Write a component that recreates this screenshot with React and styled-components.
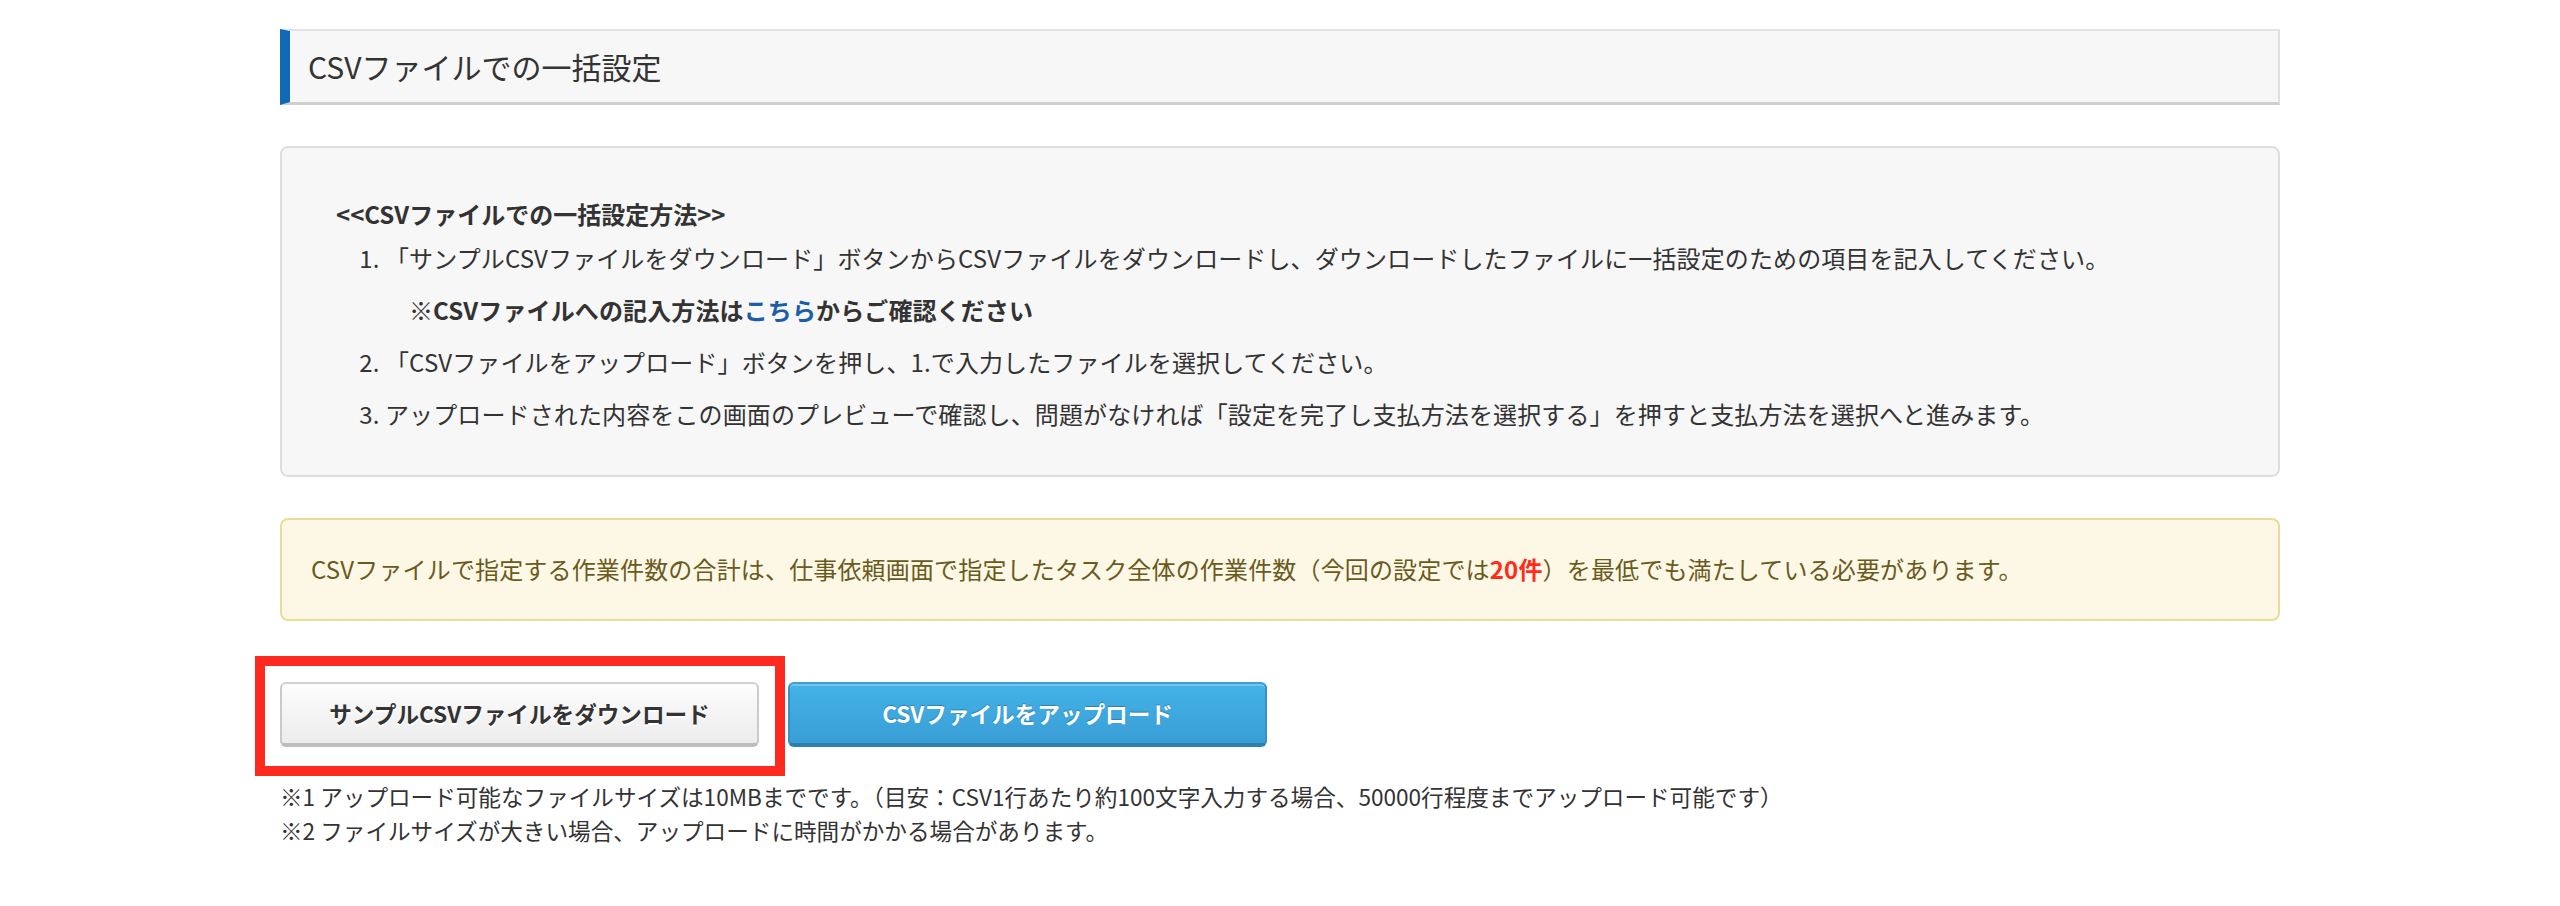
import React from "react";
import styled, { createGlobalStyle } from "styled-components";

const GlobalStyle = createGlobalStyle`
  html, body { margin: 0; padding: 0; background: #ffffff; }
  body {
    font-family: "Noto Sans CJK JP", "Noto Sans", sans-serif;
    color: #333333;
  }
  * { box-sizing: border-box; }
`;

const Page = styled.div`
  width: 2000px;
  margin: 0 auto;
  padding-top: 29px;
  padding-bottom: 40px;
`;

const SectionHeader = styled.h2`
  margin: 0;
  height: 76px;
  background: #f7f7f7;
  border-top: 2px solid #e4e4e4;
  border-right: 2px solid #e0e0e0;
  border-bottom: 3px solid #cfcfcf;
  border-left: 10px solid #0f69b4;
  padding-left: 18px;
  font-size: 30px;
  font-weight: 400;
  line-height: 71px;
  color: #333333;
`;

const InfoBox = styled.div`
  margin-top: 41px;
  background: #f7f7f7;
  border: 2px solid #dedede;
  border-radius: 8px;
  padding: 48px 54px 35px;
`;

const InfoTitle = styled.div`
  font-size: 24px;
  font-weight: 700;
  line-height: 36px;
  color: #333333;
`;

const Steps = styled.ol`
  margin: 0;
  padding-left: 49px;
  list-style: decimal outside;
  font-size: 24px;
  line-height: 52px;
  letter-spacing: 0.12px;
  color: #333333;
`;

const Step = styled.li``;

const SubNote = styled.div`
  padding-left: 24px;
  font-weight: 700;
`;

const Link = styled.a`
  color: #1a5ea8;
  text-decoration: none;
`;

const WarningBox = styled.div`
  margin-top: 41px;
  height: 103px;
  background: #fcf8e5;
  border: 2px solid #eadb98;
  border-radius: 8px;
  padding-left: 29px;
  font-size: 24px;
  letter-spacing: 0.16px;
  line-height: 97px;
  color: #6b5a1e;
`;

const Count = styled.strong`
  color: #ff2b1c;
  font-weight: 700;
`;

const ButtonRow = styled.div`
  position: relative;
  margin-top: 61px;
  display: flex;
  gap: 29px;
`;

const Button = styled.button`
  width: 479px;
  height: 65px;
  border-radius: 6px;
  font-family: "Noto Sans CJK JP", "Noto Sans", sans-serif;
  font-size: 22.6px;
  font-weight: 700;
  cursor: pointer;
  padding: 0;
  border-width: 2px 2px 4px;
  border-style: solid;
  ${(p) =>
    p.$primary
      ? `
    color: #ffffff;
    background: linear-gradient(#43b3e7, #3a9ed6);
    border-color: #3f9fd0 #3891c4 #2c7fae;
    box-shadow: inset 0 2px 0 rgba(255,255,255,0.25);
    text-shadow: 0 -1px 1px rgba(0,0,0,0.25);
  `
      : `
    color: #333333;
    background: linear-gradient(#fdfdfd, #ececec);
    border-color: #d2d2d2 #cacaca #bdbdbd;
    text-shadow: 0 2px 0 #ffffff;
  `}
`;

const Highlight = styled.div`
  position: absolute;
  left: -25px;
  top: -26px;
  width: 530px;
  height: 120px;
  border: 10px solid #ff2a1f;
  pointer-events: none;
`;

const Notes = styled.div`
  margin-top: 33px;
  font-size: 22.6px;
  line-height: 34px;
  color: #333333;
`;

export default function App() {
  return (
    <>
      <GlobalStyle />
      <Page>
        <SectionHeader>CSVファイルでの一括設定</SectionHeader>

        <InfoBox>
          <InfoTitle>&lt;&lt;CSVファイルでの一括設定方法&gt;&gt;</InfoTitle>
          <Steps>
            <Step>
              「サンプルCSVファイルをダウンロード」ボタンからCSVファイルをダウンロードし、ダウンロードしたファイルに一括設定のための項目を記入してください。
              <SubNote>
                ※CSVファイルへの記入方法は<Link href="#">こちら</Link>からご確認ください
              </SubNote>
            </Step>
            <Step>「CSVファイルをアップロード」ボタンを押し、1.で入力したファイルを選択してください。</Step>
            <Step>
              アップロードされた内容をこの画面のプレビューで確認し、問題がなければ「設定を完了し支払方法を選択する」を押すと支払方法を選択へと進みます。
            </Step>
          </Steps>
        </InfoBox>

        <WarningBox>
          CSVファイルで指定する作業件数の合計は、仕事依頼画面で指定したタスク全体の作業件数（今回の設定では<Count>20件</Count>）を最低でも満たしている必要があります。
        </WarningBox>

        <ButtonRow>
          <Button>サンプルCSVファイルをダウンロード</Button>
          <Button $primary>CSVファイルをアップロード</Button>
          <Highlight />
        </ButtonRow>

        <Notes>
          <div>※1 アップロード可能なファイルサイズは10MBまでです。（目安：CSV1行あたり約100文字入力する場合、50000行程度までアップロード可能です）</div>
          <div>※2 ファイルサイズが大きい場合、アップロードに時間がかかる場合があります。</div>
        </Notes>
      </Page>
    </>
  );
}
